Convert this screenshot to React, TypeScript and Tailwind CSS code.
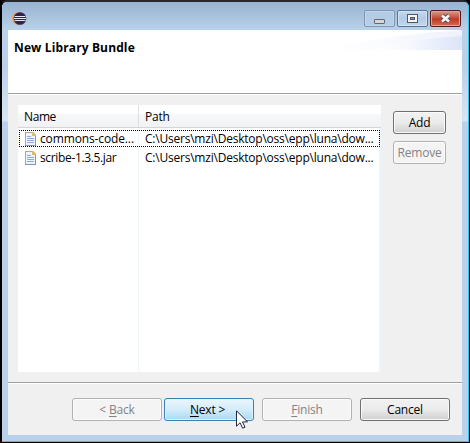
import React from "react";

const ui = "font-['Open_Sans','Noto_Sans',sans-serif]";

function FileIcon() {
  return (
    <svg width="12" height="14" viewBox="0 0 12 14" shapeRendering="crispEdges" className="shrink-0">
      <path d="M.5 .5h7l3 3v10h-10z" fill="#eef4fd" stroke="#a3aaa6" />
      <path d="M.5 .5h7" stroke="#b5a983" />
      <path d="M7 0h1l3 3v1h-4z" fill="#d9bd72" />
      <path d="M2 4.5h4M2 6.5h7M2 8.5h7M2 10.5h7" stroke="#91abd8" />
      <path d="M10.5 4v10M0 13.5h11" stroke="#7f97bd" />
    </svg>
  );
}

function Logo() {
  return (
    <svg width="15" height="13" viewBox="0 0 15 13">
      <circle cx="6.4" cy="6.5" r="6.2" fill="#f7941e" />
      <circle cx="8" cy="6.5" r="6.3" fill="#2c2255" />
      <path d="M2.5 4.5h11M2 6.5h12M2.5 8.5h11" stroke="#e9e8f3" strokeWidth="1" />
    </svg>
  );
}

function Button({ children, className = "", tone = "normal" }: { children: React.ReactNode; className?: string; tone?: "normal" | "disabled" | "hot" }) {
  const tones = {
    normal: "border-[#707070] bg-linear-to-b from-[#f2f2f2] from-0% via-[#ebebeb] via-50% to-[#cfcfcf] text-black shadow-[inset_0_0_0_1px_#fafafa]",
    disabled: "border-[#adb2b5] bg-[#f4f4f4] text-[#838383] shadow-[inset_0_0_0_1px_#fcfcfc]",
    hot: "border-[#3c7fb1] bg-linear-to-b from-[#eaf6fd] via-[#d4edfb] via-50% to-[#a7d9f5] text-black shadow-[inset_0_0_0_1px_#dff4fe]",
  };
  return (
    <button className={`flex h-[23px] shrink-0 items-center justify-center rounded-[3px] border pt-px leading-none whitespace-pre ${tones[tone]} ${className}`}>
      {children}
    </button>
  );
}

function Row({ name, path, nameClass, focused = false }: { name: string; path: string; nameClass: string; focused?: boolean }) {
  return (
    <div className="relative flex h-[19px] items-center">
      <div className="flex w-[120px] items-center pl-[7px]">
        <FileIcon />
        <span className={`ml-[3px] whitespace-pre ${nameClass}`}>{name}</span>
      </div>
      <span className="pl-[7px] tracking-[-0.22px] whitespace-pre">{path}</span>
      {focused && <div className="absolute top-px left-px h-[17px] w-[361px] border border-dotted border-black" />}
    </div>
  );
}

export default function App() {
  return (
    <div className={`h-[443px] w-[470px] overflow-hidden bg-black text-[12px] tracking-[-0.2px] text-black ${ui}`}>
      <div className="relative h-[443px] rounded-t-[7px] border-t-2 border-r border-b border-l-2 border-t-[#25292e] border-r-black border-b-black border-l-black bg-[#b9d1ea]">
        <div className="flex h-[440px] flex-col rounded-t-[5px] border-r border-b border-[#35c5e8] bg-[linear-gradient(180deg,#98b3d1_0px,#b9d1e9_28px,#b9d1ea_65px,#d6e5f5_119px,#b9d1ea_120px)] pr-[5px] pl-[6px]">
          <header className="flex h-[28px] shrink-0 items-start justify-between">
            <div className="pt-[10px] pl-[4px]"><Logo /></div>
            <div className="mt-[8px] mr-[2px] flex gap-[2px]">
              <div className="flex h-[17px] w-[31px] items-center justify-center rounded-[2px] border border-[#8195af] bg-linear-to-b from-[#b3cae4] to-[#b6cee9] shadow-[inset_0_0_0_1px_#c2d7eb]">
                <span className="mt-[5px] h-[5px] w-[11px] rounded-[1px] border border-[#646771] bg-[#d8d8d2]" />
              </div>
              <div className="flex h-[17px] w-[31px] items-center justify-center rounded-[2px] border border-[#5d7593] bg-linear-to-b from-[#c5d9ee] via-[#b2cae4] to-[#c0d8ef] shadow-[inset_0_0_0_1px_#d1e4f6]">
                <svg width="11" height="9" shapeRendering="crispEdges"><rect x=".5" y=".5" width="10" height="8" fill="#f4f4f4" stroke="#535666" /><rect x="3.5" y="3.5" width="4" height="2" fill="#7e9ab9" stroke="#535666" /></svg>
              </div>
              <div className="flex h-[17px] w-[31px] items-center justify-center rounded-[2px] border border-[#501d20] bg-linear-to-b from-[#d99a8d] via-[#bd3b25] via-55% to-[#d56b56] shadow-[inset_0_0_0_1px_#e0a196]">
                <svg width="13" height="11" viewBox="0 0 13 11"><path d="m3 2.5 7 6m0-6-7 6" stroke="#555262" strokeWidth="4.6" /><path d="m3 2.5 7 6m0-6-7 6" stroke="#f6f6f6" strokeWidth="2.6" /></svg>
              </div>
            </div>
          </header>
          <main className="flex h-[405px] w-[454px] flex-col bg-[#f0f0f0]">
            <section className="relative h-[65px] shrink-0 border-b border-b-white bg-white">
              <svg className="absolute top-0 right-0" width="140" height="20" viewBox="0 0 140 20">
                <defs>
                  <linearGradient id="sweep"><stop stopColor="#fff" /><stop offset=".4" stopColor="#f7f9fe" /><stop offset="1" stopColor="#dde4f8" /></linearGradient>
                </defs>
                <path d="M0 20Q70 4 140 0v20z" fill="url(#sweep)" opacity=".5" />
                <path d="M48 20Q95 8 140 6v14z" fill="url(#sweep)" />
              </svg>
              <h1 className="absolute top-[9px] left-[6px] text-[12px] leading-[17px] font-bold tracking-[0.13px] whitespace-pre">New Library Bundle</h1>
              <div className="absolute inset-x-0 bottom-0 h-px bg-[#a0a0a0]" />
            </section>
            <section className="flex h-[287px] shrink-0 pt-[10px] pl-[10px]">
              <div className="h-[267px] w-[363px] bg-[linear-gradient(90deg,#fff_120px,#edf5fd_120px,#edf5fd_121px,#fff_121px,#fff_361px,#edf4fc_361px)]">
                <div className="flex h-[23px] border-b border-[#d5d5d5] bg-[linear-gradient(180deg,#fff_9px,#f7f8fa_9px,#f1f2f4_22px)] leading-[23px]">
                  <div className="w-[121px] border-r border-[#dedfe1] pl-[6px] tracking-[-0.4px]">Name</div>
                  <div className="pl-[6px]">Path</div>
                </div>
                <div className="pt-px">
                  <Row name="commons-code..." nameClass="tracking-[-0.13px]" path={"C:\\Users\\mzi\\Desktop\\oss\\epp\\luna\\dow..."} focused />
                  <Row name="scribe-1.3.5.jar" nameClass="tracking-[-0.35px]" path={"C:\\Users\\mzi\\Desktop\\oss\\epp\\luna\\dow..."} />
                </div>
              </div>
              <div className="ml-[12px] flex w-[53px] flex-col gap-[7px] pt-[6px]">
                <Button>Add</Button>
                <Button tone="disabled">Remove</Button>
              </div>
            </section>
            <footer className="flex h-[53px] items-start border-t border-[#a0a0a0] pt-[15px] pl-[64px] shadow-[inset_0_1px_0_#fff]">
              <Button tone="disabled" className="w-[90px]">{"< "}<u className="underline-offset-2">B</u>ack</Button>
              <Button tone="hot" className="ml-[2px] w-[90px] pr-[3px]"><u className="underline-offset-2">N</u>{"ext >"}</Button>
              <Button tone="disabled" className="ml-[8px] w-[90px]"><u className="underline-offset-2">F</u>inish</Button>
              <Button className="ml-[8px] w-[90px]">Cancel</Button>
            </footer>
          </main>
        </div>
        <svg className="absolute top-[408px] left-[234px]" width="12" height="19" viewBox="0 0 12 19">
          <path d="M.5.8v15.4l3.6-3.4 2.5 5.4 2.4-1-2.5-5.3h5z" fill="#fff" stroke="#24243c" />
        </svg>
      </div>
    </div>
  );
}
